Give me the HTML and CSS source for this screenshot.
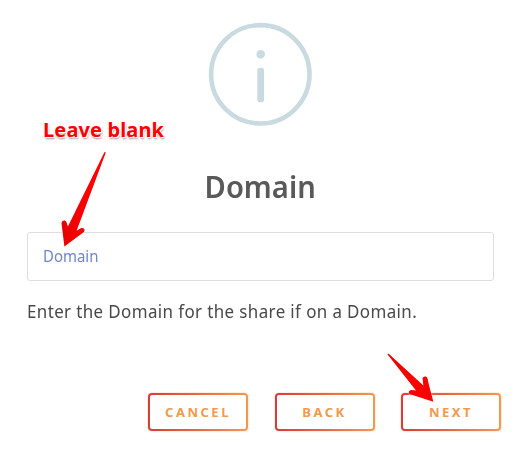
FILE: index.html
```html
<!DOCTYPE html>
<html lang="en">
<head>
<meta charset="utf-8">
<title>Domain</title>
<link rel="stylesheet" href="styles.css">
</head>
<body>
<main class="dialog">
  <svg class="info" width="104" height="104" viewBox="0 0 104 104" aria-hidden="true">
    <circle cx="52.3" cy="52.3" r="49.2" fill="none" stroke="#c9dae1" stroke-width="4.6"/>
    <circle cx="52.7" cy="32.2" r="4.3" fill="#c9dae1"/>
    <rect x="49.3" y="45.7" width="6.7" height="34.5" rx="2.8" fill="#c9dae1"/>
  </svg>
  <h1 class="title"><span>Domain</span></h1>
  <div class="field"><span>Domain</span></div>
  <p class="help"><span>Enter the Domain for the share if on a Domain.</span></p>
  <div class="actions">
    <button class="btn cancel">CANCEL</button>
    <button class="btn back">BACK</button>
    <button class="btn next">NEXT</button>
  </div>
</main>
<div class="note">Leave blank</div>
<svg class="arrows" width="524" height="450" viewBox="0 0 524 450" aria-hidden="true">
  <defs>
    <linearGradient id="red" x1="0" y1="0" x2="1" y2="0"><stop offset="0" stop-color="#e80000"/><stop offset=".65" stop-color="#ff0000"/></linearGradient>
  </defs>
  <g fill="url(#red)">
    <path d="M104.4 152.2Q105.5 151.7 105.7 152.8L76.6 230.7L80.8 228.2C83.5 227 85.7 229.4 84 231.8Q83.3 232.7 81.5 233.8L64.4 246.6L61.7 224.8C60.8 220.7 64.8 219.1 66.4 222.1L67.9 226.6Z"/>
    <path d="M387.4 354.3Q387.6 353.3 388.7 353.8L423.4 385.5L422.6 379C422.6 376.1 426.7 375.8 427.5 378.4L429 385.3L433.4 401.8L411 394.6C407.7 393.6 408.2 390.4 411.6 390.1L416 390.5Z"/>
  </g>
</svg>
</body>
</html>
```
FILE: styles.css
```css
* { box-sizing: border-box; }
body {
  margin: 0;
  width: 524px;
  height: 450px;
  overflow: hidden;
  background: #fff;
  font-family: "Noto Sans", sans-serif;
}
.dialog {
  display: flex;
  flex-direction: column;
  padding: 22px 23px 0 27px;
}
.info { display: block; margin-left: 181px; }
.title {
  margin: 41px 8px 0 0;
  height: 38px;
  text-align: center;
  font: 600 31px/38px "Noto Sans", sans-serif;
  color: #595959;
}
.title span { display: inline-block; transform: scaleX(.94); }
.field {
  margin-top: 27px;
  width: 467px;
  height: 49px;
  padding-left: 15px;
  border: 1px solid #dedede;
  border-radius: 3px;
  font-size: 17px;
  line-height: 46px;
  color: #6f86c8;
}
.field span {
  display: inline-block;
  transform: scaleX(.88);
  transform-origin: left;
}
.help {
  margin: 18px 0 0;
  height: 24px;
  font-size: 18px;
  line-height: 24px;
  letter-spacing: .42px;
  white-space: nowrap;
  color: #484848;
}
.help span {
  display: inline-block;
  transform: scaleX(.94);
  transform-origin: left;
}
.actions {
  display: flex;
  justify-content: flex-end;
  gap: 26.5px;
  margin-top: 70px;
}
.btn {
  width: 100px;
  height: 38px;
  padding: 0;
  border: 2px solid transparent;
  border-radius: 4px;
  background: linear-gradient(#fff, #fff) padding-box, linear-gradient(90deg, #d83b3b, #f29950) border-box;
  box-shadow: 0 0 2px #f2b99b;
  font: 700 13px/16px "Noto Sans", sans-serif;
  letter-spacing: 2.5px;
  color: #f09a50;
}
.note {
  position: absolute;
  left: 43px;
  top: 118px;
  font: 700 20px/24px "Noto Sans", sans-serif;
  letter-spacing: .13px;
  white-space: nowrap;
  color: #f00;
  text-shadow: -1px -1px #fff, 1px 1px #fff, 1px 2px 2px #999;
}
.arrows {
  position: absolute;
  left: 0;
  top: 0;
  pointer-events: none;
  filter: drop-shadow(0 0 1px #fff);
}
```
